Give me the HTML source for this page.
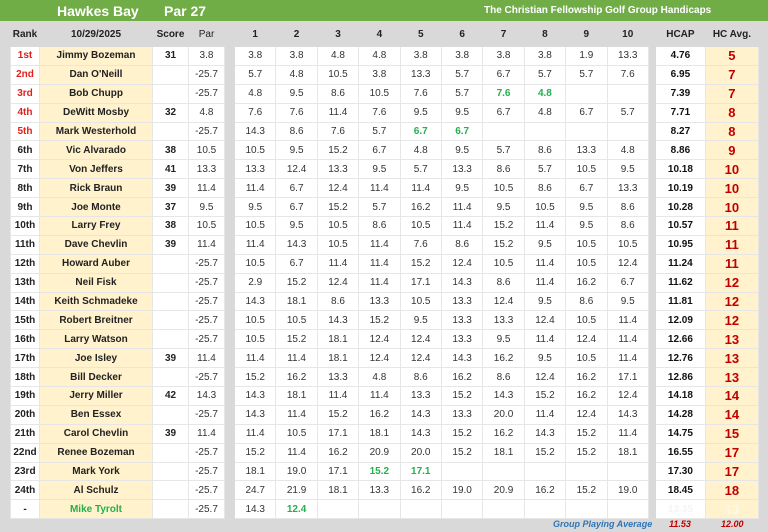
<!DOCTYPE html>
<html><head><meta charset="utf-8"><style>
body{margin:0;width:768px;height:532px;background:#d9d9d9;font-family:"Liberation Sans",sans-serif;position:relative;overflow:hidden}
.top{position:absolute;left:0;top:0;width:768px;height:21px;background:#70ad47;color:#fff;font-weight:bold}
.top span{position:absolute;top:3px}
table{position:absolute;left:10px;top:22px;border-collapse:collapse;table-layout:fixed}
td{height:17.9px;padding:0;text-align:center;font-size:10px;color:#333;border:1px solid #e6e6e6;background:#fff;white-space:nowrap;overflow:hidden}
tr.h td{height:23px;background:#d9d9d9;border-color:#d9d9d9;font-weight:bold;color:#222}
td.g{background:#d9d9d9;border-color:#d9d9d9}
td.r{font-weight:bold;color:#222}
td.rd{font-weight:bold;color:#e0201b}
td.n{background:#fff2cc;font-weight:bold;color:#222}
td.s{font-weight:bold;color:#222}
td.c{font-weight:bold;color:#111}
td.a{background:#fff2cc;font-weight:bold;color:#c00000;font-size:13px}
.gr{color:#22b14c;font-weight:bold}
.foot{position:absolute;top:519px;font-size:9px;font-style:italic;font-weight:bold}
</style></head><body>
<div class="top"><span style="left:57px;font-size:14px">Hawkes Bay</span><span style="left:164px;font-size:14px">Par 27</span><span style="left:484px;font-size:10px;top:5px">The Christian Fellowship Golf Group Handicaps</span></div>
<table>
<colgroup><col style="width:29px"><col style="width:113px"><col style="width:36px"><col style="width:36px"><col style="width:10px"><col style="width:41.4px"><col style="width:41.4px"><col style="width:41.4px"><col style="width:41.4px"><col style="width:41.4px"><col style="width:41.4px"><col style="width:41.4px"><col style="width:41.4px"><col style="width:41.4px"><col style="width:41.4px"><col style="width:7px"><col style="width:50px"><col style="width:53px"></colgroup>
<tr class="h"><td>Rank</td><td>10/29/2025</td><td>Score</td><td style="font-weight:normal">Par</td><td></td><td>1</td><td>2</td><td>3</td><td>4</td><td>5</td><td>6</td><td>7</td><td>8</td><td>9</td><td>10</td><td></td><td>HCAP</td><td>HC Avg.</td></tr>
<tr><td class="rd">1st</td><td class="n">Jimmy Bozeman</td><td class="s">31</td><td>3.8</td><td class="g"></td><td>3.8</td><td>3.8</td><td>4.8</td><td>4.8</td><td>3.8</td><td>3.8</td><td>3.8</td><td>3.8</td><td>1.9</td><td>13.3</td><td class="g"></td><td class="c">4.76</td><td class="a">5</td></tr>
<tr><td class="rd">2nd</td><td class="n">Dan O'Neill</td><td class="s"></td><td>-25.7</td><td class="g"></td><td>5.7</td><td>4.8</td><td>10.5</td><td>3.8</td><td>13.3</td><td>5.7</td><td>6.7</td><td>5.7</td><td>5.7</td><td>7.6</td><td class="g"></td><td class="c">6.95</td><td class="a">7</td></tr>
<tr><td class="rd">3rd</td><td class="n">Bob Chupp</td><td class="s"></td><td>-25.7</td><td class="g"></td><td>4.8</td><td>9.5</td><td>8.6</td><td>10.5</td><td>7.6</td><td>5.7</td><td class="gr">7.6</td><td class="gr">4.8</td><td></td><td></td><td class="g"></td><td class="c">7.39</td><td class="a">7</td></tr>
<tr><td class="rd">4th</td><td class="n">DeWitt Mosby</td><td class="s">32</td><td>4.8</td><td class="g"></td><td>7.6</td><td>7.6</td><td>11.4</td><td>7.6</td><td>9.5</td><td>9.5</td><td>6.7</td><td>4.8</td><td>6.7</td><td>5.7</td><td class="g"></td><td class="c">7.71</td><td class="a">8</td></tr>
<tr><td class="rd">5th</td><td class="n">Mark Westerhold</td><td class="s"></td><td>-25.7</td><td class="g"></td><td>14.3</td><td>8.6</td><td>7.6</td><td>5.7</td><td class="gr">6.7</td><td class="gr">6.7</td><td></td><td></td><td></td><td></td><td class="g"></td><td class="c">8.27</td><td class="a">8</td></tr>
<tr><td class="r">6th</td><td class="n">Vic Alvarado</td><td class="s">38</td><td>10.5</td><td class="g"></td><td>10.5</td><td>9.5</td><td>15.2</td><td>6.7</td><td>4.8</td><td>9.5</td><td>5.7</td><td>8.6</td><td>13.3</td><td>4.8</td><td class="g"></td><td class="c">8.86</td><td class="a">9</td></tr>
<tr><td class="r">7th</td><td class="n">Von Jeffers</td><td class="s">41</td><td>13.3</td><td class="g"></td><td>13.3</td><td>12.4</td><td>13.3</td><td>9.5</td><td>5.7</td><td>13.3</td><td>8.6</td><td>5.7</td><td>10.5</td><td>9.5</td><td class="g"></td><td class="c">10.18</td><td class="a">10</td></tr>
<tr><td class="r">8th</td><td class="n">Rick Braun</td><td class="s">39</td><td>11.4</td><td class="g"></td><td>11.4</td><td>6.7</td><td>12.4</td><td>11.4</td><td>11.4</td><td>9.5</td><td>10.5</td><td>8.6</td><td>6.7</td><td>13.3</td><td class="g"></td><td class="c">10.19</td><td class="a">10</td></tr>
<tr><td class="r">9th</td><td class="n">Joe Monte</td><td class="s">37</td><td>9.5</td><td class="g"></td><td>9.5</td><td>6.7</td><td>15.2</td><td>5.7</td><td>16.2</td><td>11.4</td><td>9.5</td><td>10.5</td><td>9.5</td><td>8.6</td><td class="g"></td><td class="c">10.28</td><td class="a">10</td></tr>
<tr><td class="r">10th</td><td class="n">Larry Frey</td><td class="s">38</td><td>10.5</td><td class="g"></td><td>10.5</td><td>9.5</td><td>10.5</td><td>8.6</td><td>10.5</td><td>11.4</td><td>15.2</td><td>11.4</td><td>9.5</td><td>8.6</td><td class="g"></td><td class="c">10.57</td><td class="a">11</td></tr>
<tr><td class="r">11th</td><td class="n">Dave Chevlin</td><td class="s">39</td><td>11.4</td><td class="g"></td><td>11.4</td><td>14.3</td><td>10.5</td><td>11.4</td><td>7.6</td><td>8.6</td><td>15.2</td><td>9.5</td><td>10.5</td><td>10.5</td><td class="g"></td><td class="c">10.95</td><td class="a">11</td></tr>
<tr><td class="r">12th</td><td class="n">Howard Auber</td><td class="s"></td><td>-25.7</td><td class="g"></td><td>10.5</td><td>6.7</td><td>11.4</td><td>11.4</td><td>15.2</td><td>12.4</td><td>10.5</td><td>11.4</td><td>10.5</td><td>12.4</td><td class="g"></td><td class="c">11.24</td><td class="a">11</td></tr>
<tr><td class="r">13th</td><td class="n">Neil Fisk</td><td class="s"></td><td>-25.7</td><td class="g"></td><td>2.9</td><td>15.2</td><td>12.4</td><td>11.4</td><td>17.1</td><td>14.3</td><td>8.6</td><td>11.4</td><td>16.2</td><td>6.7</td><td class="g"></td><td class="c">11.62</td><td class="a">12</td></tr>
<tr><td class="r">14th</td><td class="n">Keith Schmadeke</td><td class="s"></td><td>-25.7</td><td class="g"></td><td>14.3</td><td>18.1</td><td>8.6</td><td>13.3</td><td>10.5</td><td>13.3</td><td>12.4</td><td>9.5</td><td>8.6</td><td>9.5</td><td class="g"></td><td class="c">11.81</td><td class="a">12</td></tr>
<tr><td class="r">15th</td><td class="n">Robert Breitner</td><td class="s"></td><td>-25.7</td><td class="g"></td><td>10.5</td><td>10.5</td><td>14.3</td><td>15.2</td><td>9.5</td><td>13.3</td><td>13.3</td><td>12.4</td><td>10.5</td><td>11.4</td><td class="g"></td><td class="c">12.09</td><td class="a">12</td></tr>
<tr><td class="r">16th</td><td class="n">Larry Watson</td><td class="s"></td><td>-25.7</td><td class="g"></td><td>10.5</td><td>15.2</td><td>18.1</td><td>12.4</td><td>12.4</td><td>13.3</td><td>9.5</td><td>11.4</td><td>12.4</td><td>11.4</td><td class="g"></td><td class="c">12.66</td><td class="a">13</td></tr>
<tr><td class="r">17th</td><td class="n">Joe Isley</td><td class="s">39</td><td>11.4</td><td class="g"></td><td>11.4</td><td>11.4</td><td>18.1</td><td>12.4</td><td>12.4</td><td>14.3</td><td>16.2</td><td>9.5</td><td>10.5</td><td>11.4</td><td class="g"></td><td class="c">12.76</td><td class="a">13</td></tr>
<tr><td class="r">18th</td><td class="n">Bill Decker</td><td class="s"></td><td>-25.7</td><td class="g"></td><td>15.2</td><td>16.2</td><td>13.3</td><td>4.8</td><td>8.6</td><td>16.2</td><td>8.6</td><td>12.4</td><td>16.2</td><td>17.1</td><td class="g"></td><td class="c">12.86</td><td class="a">13</td></tr>
<tr><td class="r">19th</td><td class="n">Jerry Miller</td><td class="s">42</td><td>14.3</td><td class="g"></td><td>14.3</td><td>18.1</td><td>11.4</td><td>11.4</td><td>13.3</td><td>15.2</td><td>14.3</td><td>15.2</td><td>16.2</td><td>12.4</td><td class="g"></td><td class="c">14.18</td><td class="a">14</td></tr>
<tr><td class="r">20th</td><td class="n">Ben Essex</td><td class="s"></td><td>-25.7</td><td class="g"></td><td>14.3</td><td>11.4</td><td>15.2</td><td>16.2</td><td>14.3</td><td>13.3</td><td>20.0</td><td>11.4</td><td>12.4</td><td>14.3</td><td class="g"></td><td class="c">14.28</td><td class="a">14</td></tr>
<tr><td class="r">21th</td><td class="n">Carol Chevlin</td><td class="s">39</td><td>11.4</td><td class="g"></td><td>11.4</td><td>10.5</td><td>17.1</td><td>18.1</td><td>14.3</td><td>15.2</td><td>16.2</td><td>14.3</td><td>15.2</td><td>11.4</td><td class="g"></td><td class="c">14.75</td><td class="a">15</td></tr>
<tr><td class="r">22nd</td><td class="n">Renee Bozeman</td><td class="s"></td><td>-25.7</td><td class="g"></td><td>15.2</td><td>11.4</td><td>16.2</td><td>20.9</td><td>20.0</td><td>15.2</td><td>18.1</td><td>15.2</td><td>15.2</td><td>18.1</td><td class="g"></td><td class="c">16.55</td><td class="a">17</td></tr>
<tr><td class="r">23rd</td><td class="n">Mark York</td><td class="s"></td><td>-25.7</td><td class="g"></td><td>18.1</td><td>19.0</td><td>17.1</td><td class="gr">15.2</td><td class="gr">17.1</td><td></td><td></td><td></td><td></td><td></td><td class="g"></td><td class="c">17.30</td><td class="a">17</td></tr>
<tr><td class="r">24th</td><td class="n">Al Schulz</td><td class="s"></td><td>-25.7</td><td class="g"></td><td>24.7</td><td>21.9</td><td>18.1</td><td>13.3</td><td>16.2</td><td>19.0</td><td>20.9</td><td>16.2</td><td>15.2</td><td>19.0</td><td class="g"></td><td class="c">18.45</td><td class="a">18</td></tr>
<tr><td class="r">-</td><td class="n" style="color:#22b14c">Mike Tyrolt</td><td class="s"></td><td>-25.7</td><td class="g"></td><td>14.3</td><td class="gr">12.4</td><td></td><td></td><td></td><td></td><td></td><td></td><td></td><td></td><td class="g"></td><td class="c" style="color:#f4f4f4">13.35</td><td class="a" style="color:#fafae8">13</td></tr>
</table>
<div class="foot" style="left:553px;color:#2e75b6">Group Playing Average</div>
<div class="foot" style="left:669px;color:#c00000">11.53</div>
<div class="foot" style="left:721px;color:#c00000">12.00</div>
</body></html>
